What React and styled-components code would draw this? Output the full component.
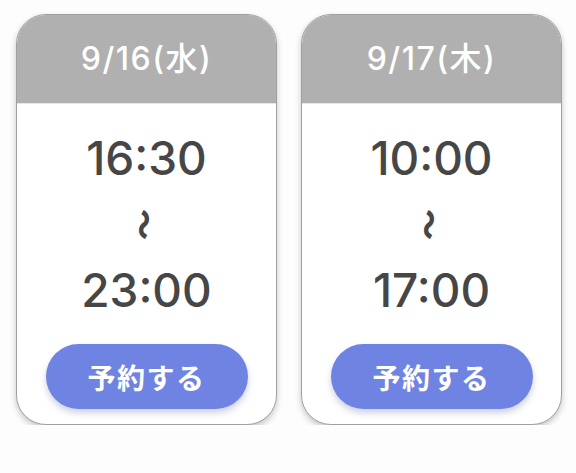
import React from 'react';
import styled, { createGlobalStyle } from 'styled-components';

const GlobalStyle = createGlobalStyle`
  html, body {
    margin: 0;
    padding: 0;
    background: #fdfdfd;
  }
  body {
    font-family: Inter, "Noto Sans CJK JP", sans-serif;
  }
`;

const Page = styled.div`
  display: flex;
  gap: 24px;
  padding: 14px 0 0 16px;
`;

const Card = styled.div`
  width: 261px;
  height: 411px;
  box-sizing: border-box;
  display: flex;
  flex-direction: column;
  background: #ffffff;
  border: 1.5px solid #a0a0a0;
  border-radius: 30px;
  overflow: hidden;
  box-shadow: 0 3px 6px rgba(0, 0, 0, 0.22);
`;

const Header = styled.div`
  height: 89px;
  flex-shrink: 0;
  display: flex;
  align-items: center;
  justify-content: center;
  background: #b0b0b0;
  border-bottom: 1.5px solid #e6e6e6;
  color: #ffffff;
  font-family: Inter, "Noto Sans CJK JP", sans-serif;
  font-size: 32px;
  font-weight: 500;
  letter-spacing: 1.5px;
  padding-bottom: 6px;
  box-sizing: border-box;
`;

const Body = styled.div`
  flex: 1;
  display: flex;
  flex-direction: column;
  align-items: center;
  padding-top: 26px;
`;

const Time = styled.div`
  height: 56px;
  line-height: 56px;
  font-family: Inter, sans-serif;
  font-size: 46px;
  font-weight: 500;
  color: #464646;
`;

const Tilde = styled.div`
  height: 76px;
  display: flex;
  align-items: center;
  justify-content: center;
  font-family: "Noto Sans CJK JP", sans-serif;
  font-size: 26px;
  font-weight: 900;
  color: #464646;
  span {
    display: inline-block;
    transform: rotate(90deg) scaleX(1.2) scaleY(1.1);
  }
`;

const Button = styled.button`
  margin-top: 26px;
  width: 202px;
  height: 65px;
  border: none;
  border-radius: 33px;
  background: #6f84e2;
  color: #ffffff;
  font-family: "Noto Sans CJK JP", sans-serif;
  font-size: 28px;
  font-weight: 700;
  letter-spacing: 1.5px;
  box-shadow: 0 4px 6px rgba(60, 70, 140, 0.25);
  cursor: pointer;
`;

const slots = [
  { date: '9/16(水)', from: '16:30', to: '23:00' },
  { date: '9/17(木)', from: '10:00', to: '17:00' },
];

const App = () => (
  <>
    <GlobalStyle />
    <Page>
      {slots.map((s) => (
        <Card key={s.date}>
          <Header>{s.date}</Header>
          <Body>
            <Time>{s.from}</Time>
            <Tilde><span>〜</span></Tilde>
            <Time>{s.to}</Time>
            <Button>予約する</Button>
          </Body>
        </Card>
      ))}
    </Page>
  </>
);

export default App;
